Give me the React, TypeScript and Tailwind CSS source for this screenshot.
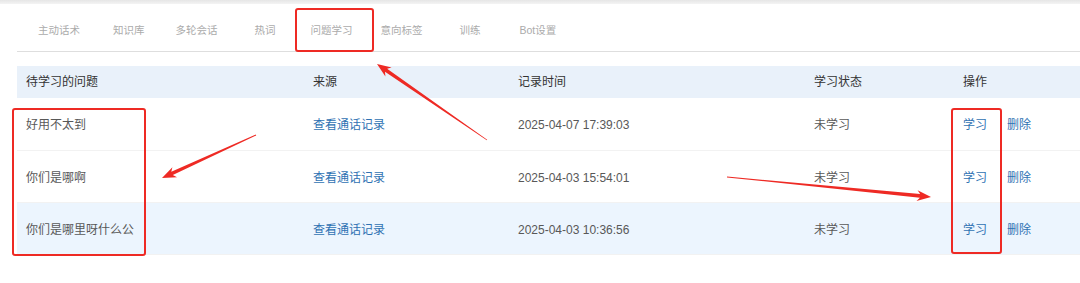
import React from "react";

type Pt = [number, number];

function arrowPoints(tail: Pt, tip: Pt, headLen = 14, headHalf = 5.5, tailHalf = 0.4, neckHalf = 1.8): string {
  const dx = tip[0] - tail[0];
  const dy = tip[1] - tail[1];
  const len = Math.hypot(dx, dy);
  const ux = dx / len;
  const uy = dy / len;
  const nx = -uy;
  const ny = ux;
  const bx = tip[0] - ux * headLen;
  const by = tip[1] - uy * headLen;
  const neckX = tip[0] - ux * (headLen - 3);
  const neckY = tip[1] - uy * (headLen - 3);
  const pts: Pt[] = [
    [tail[0] + nx * tailHalf, tail[1] + ny * tailHalf],
    [neckX + nx * neckHalf, neckY + ny * neckHalf],
    [bx + nx * headHalf, by + ny * headHalf],
    [tip[0], tip[1]],
    [bx - nx * headHalf, by - ny * headHalf],
    [neckX - nx * neckHalf, neckY - ny * neckHalf],
    [tail[0] - nx * tailHalf, tail[1] - ny * tailHalf],
  ];
  return pts.map((p) => `${p[0].toFixed(1)},${p[1].toFixed(1)}`).join(" ");
}

const tabs = [
  { t: "主动话术", c: "ml-0" },
  { t: "知识库", c: "ml-[33px]" },
  { t: "多轮会话", c: "ml-[31px]" },
  { t: "热词", c: "ml-[37px]" },
  { t: "问题学习", c: "ml-[35px]" },
  { t: "意向标签", c: "ml-[28px]" },
  { t: "训练", c: "ml-[37px]" },
  { t: "Bot设置", c: "ml-[39px]" },
];

const rows = [
  { q: "好用不太到", t: "2025-04-07 17:39:03", h: "h-[53px]", bg: "bg-white" },
  { q: "你们是哪啊", t: "2025-04-03 15:54:01", h: "h-[52px]", bg: "bg-white" },
  { q: "你们是哪里呀什么公", t: "2025-04-03 10:36:56", h: "h-[52px]", bg: "bg-[#ecf5fe]" },
];

export default function App() {
  return (
    <div className="relative w-[1080px] h-[283px] bg-white overflow-hidden font-['Liberation_Sans','Noto_Sans_CJK_SC',sans-serif]">
      <div className="h-[4px] bg-gradient-to-b from-[#e6e6e6] to-[#f4f4f4]" />
      <div className="ml-[17px] h-[48px] pt-[6px] border-b border-[#dedede] flex items-center pl-[21px] text-[10.5px] text-[#ababab]">
        {tabs.map((t) => (
          <span key={t.t} className={t.c}>
            {t.t}
          </span>
        ))}
      </div>
      <div className="ml-[17px] mt-[14px] text-[12px]">
        <div className="grid grid-cols-[287px_205px_296px_149px_1fr] h-[32px] items-center bg-[#e9f1fa] text-[#333]">
          <div className="pl-[9px]">待学习的问题</div>
          <div className="pl-[9px]">来源</div>
          <div className="pl-[9px]">记录时间</div>
          <div className="pl-[9px]">学习状态</div>
          <div className="pl-[9px]">操作</div>
        </div>
        {rows.map((r, i) => (
          <div
            key={i}
            className={`grid grid-cols-[287px_205px_296px_149px_1fr] items-center pt-[2px] border-b border-[#f2f2f2] text-[#585858] ${r.h} ${r.bg}`}
          >
            <div className="pl-[9px]">{r.q}</div>
            <div className="pl-[9px] text-[#2f72b3]">查看通话记录</div>
            <div className="pl-[9px]">{r.t}</div>
            <div className="pl-[9px]">未学习</div>
            <div className="pl-[9px] flex gap-[20px] text-[#2f72b3]">
              <span>学习</span>
              <span>删除</span>
            </div>
          </div>
        ))}
      </div>

      {/* annotations */}
      <div className="absolute left-[295px] top-[8px] w-[79px] h-[44px] border-2 border-[#ee2a24] rounded-[3px]" />
      <div className="absolute left-[12px] top-[108px] w-[134px] h-[148px] border-2 border-[#ee2a24] rounded-[3px]" />
      <div className="absolute left-[951px] top-[108px] w-[51px] h-[146px] border-2 border-[#ee2a24] rounded-[3px]" />
      <svg className="absolute inset-0 pointer-events-none" width="1080" height="283" viewBox="0 0 1080 283">
        <polygon points={arrowPoints([487, 140], [377, 64])} fill="#ee2a24" />
        <polygon points={arrowPoints([256, 135], [162, 178])} fill="#ee2a24" />
        <polygon points={arrowPoints([727, 177], [931, 197])} fill="#ee2a24" />
      </svg>
    </div>
  );
}
